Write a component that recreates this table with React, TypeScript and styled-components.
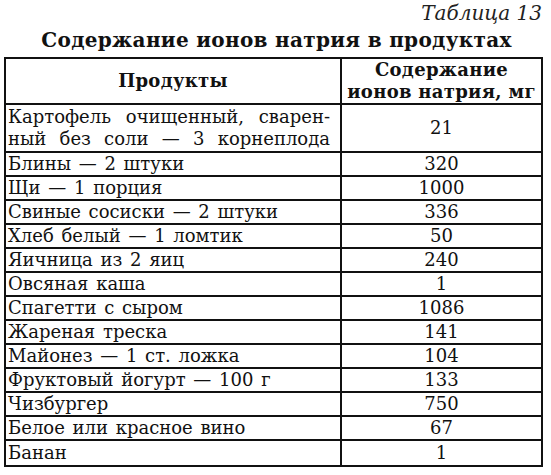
import React, { FC } from 'react';
import styled, { createGlobalStyle } from 'styled-components';

const serif = `"DejaVu Serif", "Liberation Serif", "Noto Serif", serif`;

const GlobalStyle = createGlobalStyle`
    html, body {
        margin: 0;
        padding: 0;
        background: #fff;
    }
`;

const Page = styled.div`
    width: 551px;
    padding: 0 8px 0 4px;
    box-sizing: border-box;
    font-family: ${serif};
    color: #111;
`;

const Caption = styled.div`
    text-align: right;
    font-family: ${serif};
    font-style: italic;
    font-size: 20px;
    line-height: 24px;
    height: 25px;
    padding: 1px 1px 0 0;
    color: #222;
`;

const Title = styled.h1`
    margin: 0;
    padding-left: 6px;
    text-align: center;
    font-family: ${serif};
    font-size: 20px;
    line-height: 29px;
    height: 31px;
    font-weight: bold;
    letter-spacing: 0.3px;
    color: #111;
`;

const Table = styled.table`
    width: 539px;
    border-collapse: collapse;
    table-layout: fixed;
    border: 2px solid #111;
    font-family: ${serif};
`;

const HeadCell = styled.th`
    border: 2px solid #111;
    height: 42px;
    padding: 0;
    font-family: ${serif};
    font-size: 18px;
    line-height: 22px;
    font-weight: bold;
    text-align: center;
    vertical-align: middle;
    letter-spacing: 0.3px;
`;

const Cell = styled.td<{ $num?: boolean; $h?: number }>`
    border-left: 2px solid #111;
    border-right: 2px solid #111;
    border-bottom: 2px solid #111;
    height: ${p => p.$h ?? 22}px;
    padding: 0 2px;
    font-family: ${serif};
    font-size: 18px;
    line-height: 22px;
    text-align: ${p => (p.$num ? 'center' : 'left')};
    vertical-align: middle;
    word-spacing: ${p => (p.$num ? 0 : 2)}px;
    color: #111;
    white-space: nowrap;
`;

const JustLine = styled.span`
    display: block;
    text-align: justify;
    text-align-last: justify;
    white-space: normal;
    padding-right: 8px;
`;

const rows: [string, string][] = [
    ['Блины — 2 штуки', '320'],
    ['Щи — 1 порция', '1000'],
    ['Свиные сосиски — 2 штуки', '336'],
    ['Хлеб белый — 1 ломтик', '50'],
    ['Яичница из 2 яиц', '240'],
    ['Овсяная каша', '1'],
    ['Спагетти с сыром', '1086'],
    ['Жареная треска', '141'],
    ['Майонез — 1 ст. ложка', '104'],
    ['Фруктовый йогурт — 100 г', '133'],
    ['Чизбургер', '750'],
    ['Белое или красное вино', '67'],
    ['Банан', '1'],
];

const App: FC = () => (
    <>
        <GlobalStyle />
        <Page>
            <Caption>Таблица 13</Caption>
            <Title>Содержание ионов натрия в продуктах</Title>
            <Table>
                <colgroup>
                    <col style={{ width: 336 }} />
                    <col />
                </colgroup>
                <thead>
                    <tr>
                        <HeadCell>Продукты</HeadCell>
                        <HeadCell>Содержание<br />ионов натрия, мг</HeadCell>
                    </tr>
                </thead>
                <tbody>
                    <tr>
                        <Cell $h={46}>
                            <JustLine>Картофель очищенный, сварен-</JustLine>
                            <JustLine>ный без соли — 3 корнеплода</JustLine>
                        </Cell>
                        <Cell $num>21</Cell>
                    </tr>
                    {rows.map(([name, value], i) => (
                        <tr key={name}>
                            <Cell $h={i === rows.length - 1 ? 24 : 22}>{name}</Cell>
                            <Cell $num>{value}</Cell>
                        </tr>
                    ))}
                </tbody>
            </Table>
        </Page>
    </>
);

export default App;
